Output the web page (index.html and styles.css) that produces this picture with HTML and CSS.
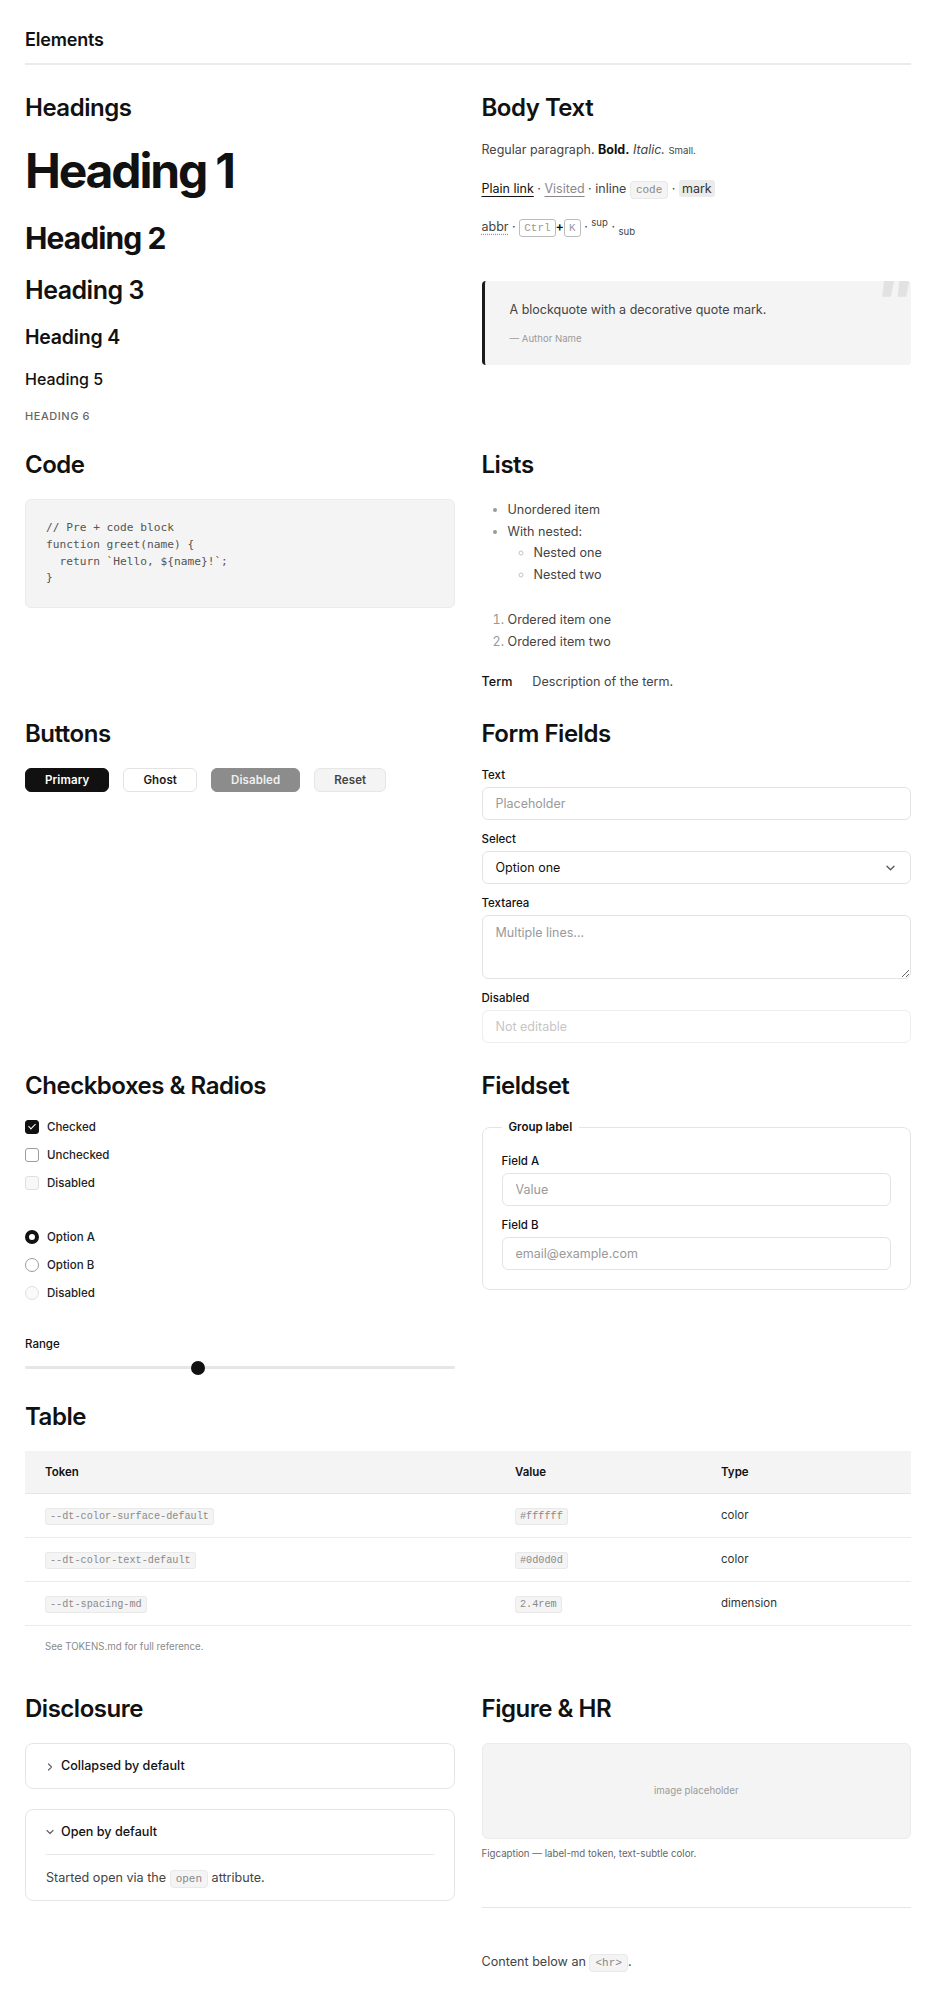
FILE: index.html
```html
<!DOCTYPE html>
<html lang="en">
<head>
<meta charset="utf-8">
<title>Elements</title>
<link rel="stylesheet" href="styles.css">
</head>
<body>
<div class="page">
  <header class="page-header">
    <h1 class="page-title">Elements</h1>
  </header>

  <main class="grid">
    <section class="sec">
      <h2 class="sec-title">Headings</h2>
      <div class="heading-stack">
        <h1 class="h1">Heading 1</h1>
        <h2 class="h2">Heading 2</h2>
        <h3 class="h3">Heading 3</h3>
        <h4 class="h4">Heading 4</h4>
        <h5 class="h5">Heading 5</h5>
        <h6 class="h6">Heading 6</h6>
      </div>
    </section>

    <section class="sec">
      <h2 class="sec-title">Body Text</h2>
      <p class="para para-first">Regular paragraph. <strong class="bold">Bold.</strong> <em class="italic">Italic.</em> <small class="small">Small.</small></p>
      <p class="para"><a class="link" href="#plain">Plain link</a> · <a class="link link-visited" href="#visited">Visited</a> · inline <code class="code-inline">code</code> · <mark class="mark">mark</mark></p>
      <p class="para"><abbr class="abbr" title="abbreviation">abbr</abbr> · <kbd class="kbd">Ctrl</kbd><span class="plus">+</span><kbd class="kbd">K</kbd> · <sup class="sup">sup</sup> · <sub class="sub">sub</sub></p>
      <blockquote class="quote">
        <p class="quote-text">A blockquote with a decorative quote mark.</p>
        <cite class="quote-cite">— Author Name</cite>
      </blockquote>
    </section>

    <section class="sec">
      <h2 class="sec-title">Code</h2>
<pre class="pre"><code>// Pre + code block
function greet(name) {
  return `Hello, ${name}!`;
}</code></pre>
    </section>

    <section class="sec">
      <h2 class="sec-title">Lists</h2>
      <ul class="ul">
        <li>Unordered item</li>
        <li>With nested:
          <ul class="ul-nested">
            <li>Nested one</li>
            <li>Nested two</li>
          </ul>
        </li>
      </ul>
      <ol class="ol">
        <li>Ordered item one</li>
        <li>Ordered item two</li>
      </ol>
      <dl class="dl">
        <dt class="dt">Term</dt>
        <dd class="dd">Description of the term.</dd>
      </dl>
    </section>

    <section class="sec">
      <h2 class="sec-title">Buttons</h2>
      <div class="btn-row">
        <button class="btn btn-primary" type="button">Primary</button>
        <button class="btn btn-ghost" type="button">Ghost</button>
        <button class="btn btn-disabled" type="button" disabled>Disabled</button>
        <button class="btn btn-reset" type="reset">Reset</button>
      </div>
    </section>

    <section class="sec sec-form">
      <h2 class="sec-title">Form Fields</h2>
      <div class="fields">
        <div class="field">
          <label class="label" for="f-text">Text</label>
          <input class="input" id="f-text" type="text" placeholder="Placeholder">
        </div>
        <div class="field">
          <label class="label" for="f-select">Select</label>
          <div class="select-wrap">
            <select class="input select" id="f-select">
              <option>Option one</option>
              <option>Option two</option>
            </select>
            <svg class="select-chev" width="9" height="6" viewBox="0 0 9 6" aria-hidden="true"><path d="M1 1.2l3.5 3.5L8 1.2" fill="none" stroke="#555" stroke-width="1.3" stroke-linecap="round" stroke-linejoin="round"/></svg>
          </div>
        </div>
        <div class="field">
          <label class="label" for="f-area">Textarea</label>
          <textarea class="input textarea" id="f-area" placeholder="Multiple lines..."></textarea>
        </div>
        <div class="field">
          <label class="label" for="f-dis">Disabled</label>
          <input class="input" id="f-dis" type="text" placeholder="Not editable" disabled>
        </div>
      </div>
    </section>

    <section class="sec">
      <h2 class="sec-title">Checkboxes &amp; Radios</h2>
      <div class="choice-group">
        <label class="choice"><input class="cb" type="checkbox" checked><span>Checked</span></label>
        <label class="choice"><input class="cb" type="checkbox"><span>Unchecked</span></label>
        <label class="choice"><input class="cb" type="checkbox" disabled><span>Disabled</span></label>
      </div>
      <div class="choice-group radios">
        <label class="choice"><input class="rb" type="radio" name="opt" checked><span>Option A</span></label>
        <label class="choice"><input class="rb" type="radio" name="opt"><span>Option B</span></label>
        <label class="choice"><input class="rb" type="radio" name="opt" disabled><span>Disabled</span></label>
      </div>
      <div class="range-block">
        <label class="label" for="f-range">Range</label>
        <input class="range" id="f-range" type="range" min="0" max="100" value="40">
      </div>
    </section>

    <section class="sec">
      <h2 class="sec-title">Fieldset</h2>
      <fieldset class="fieldset">
        <legend class="legend">Group label</legend>
        <div class="fields">
          <div class="field">
            <label class="label" for="f-a">Field A</label>
            <input class="input" id="f-a" type="text" placeholder="Value">
          </div>
          <div class="field">
            <label class="label" for="f-b">Field B</label>
            <input class="input" id="f-b" type="email" placeholder="email@example.com">
          </div>
        </div>
      </fieldset>
    </section>

    <section class="sec sec-wide">
      <h2 class="sec-title">Table</h2>
      <table class="table">
        <caption class="table-caption">See TOKENS.md for full reference.</caption>
        <colgroup>
          <col class="col-token">
          <col class="col-value">
          <col>
        </colgroup>
        <thead>
          <tr><th>Token</th><th>Value</th><th>Type</th></tr>
        </thead>
        <tbody>
          <tr><td><code class="chip">--dt-color-surface-default</code></td><td><code class="chip">#ffffff</code></td><td>color</td></tr>
          <tr><td><code class="chip">--dt-color-text-default</code></td><td><code class="chip">#0d0d0d</code></td><td>color</td></tr>
          <tr><td><code class="chip">--dt-spacing-md</code></td><td><code class="chip">2.4rem</code></td><td>dimension</td></tr>
        </tbody>
      </table>
    </section>

    <section class="sec">
      <h2 class="sec-title">Disclosure</h2>
      <details class="disclosure">
        <summary class="summary"><svg class="chev" width="8" height="8" viewBox="0 0 8 8" aria-hidden="true"><path d="M2.5 1l3 3-3 3" fill="none" stroke="#666" stroke-width="1.2" stroke-linecap="round" stroke-linejoin="round"/></svg>Collapsed by default</summary>
        <div class="disclosure-body">Hidden content.</div>
      </details>
      <details class="disclosure" open>
        <summary class="summary"><svg class="chev" width="8" height="8" viewBox="0 0 8 8" aria-hidden="true"><path d="M2.5 1l3 3-3 3" fill="none" stroke="#666" stroke-width="1.2" stroke-linecap="round" stroke-linejoin="round"/></svg>Open by default</summary>
        <div class="disclosure-body">Started open via the <code class="code-inline">open</code> attribute.</div>
      </details>
    </section>

    <section class="sec">
      <h2 class="sec-title">Figure &amp; HR</h2>
      <figure class="figure">
        <div class="figure-img">image placeholder</div>
        <figcaption class="figcaption">Figcaption — label-md token, text-subtle color.</figcaption>
      </figure>
      <hr class="hr">
      <p class="after-hr">Content below an <code class="code-inline">&lt;hr&gt;</code>.</p>
    </section>
  </main>
</div>
</body>
</html>
```

FILE: styles.css
```css
* { box-sizing: border-box; }

html, body {
  margin: 0;
  padding: 0;
  background: #ffffff;
}

body {
  font-family: Inter, "Liberation Sans", sans-serif;
  color: #111111;
  -webkit-font-smoothing: antialiased;
}

.page {
  padding: 0 23px 60px 25px;
}

.page-header {
  padding: 29px 0 12px;
  border-bottom: 2px solid #ebebeb;
}

.page-title {
  margin: 0;
  font-size: 18px;
  line-height: 22px;
  font-weight: 600;
  letter-spacing: -0.01em;
}

.grid {
  display: grid;
  grid-template-columns: 1fr 1fr;
  column-gap: 27px;
  row-gap: 26px;
  padding-top: 28px;
  align-items: start;
}

.sec { min-width: 0; }
.sec-wide { grid-column: 1 / -1; }
.sec-form { padding-bottom: 2px; }

.sec-title {
  margin: 0 0 20px;
  font-size: 24px;
  line-height: 29px;
  font-weight: 600;
  letter-spacing: -0.02em;
  color: #111111;
}

/* Headings */
.heading-stack {
  display: flex;
  flex-direction: column;
  gap: 18px;
}
.heading-stack > * { margin: 0; color: #111111; }
.h1 { font-size: 48px; line-height: 58px; font-weight: 700; letter-spacing: -0.045em; }
.h2 { font-size: 30px; line-height: 36px; font-weight: 700; letter-spacing: -0.03em; margin-top: 2px; }
.h3 { font-size: 25px; line-height: 30px; font-weight: 600; letter-spacing: -0.02em; margin-top: 1px; }
.h4 { font-size: 19.5px; line-height: 26px; font-weight: 600; letter-spacing: -0.01em; margin-top: 1px; }
.h5 { font-size: 16px; line-height: 22px; font-weight: 500; }
.h6 { font-size: 11px; line-height: 16px; font-weight: 500; text-transform: uppercase; letter-spacing: 0.05em; color: #666666; }

/* Body text */
.para {
  margin: 0 0 18px;
  font-size: 12.5px;
  line-height: 20px;
  color: #444444;
}
.para-first { margin-top: -2px; }
.bold { font-weight: 700; color: #111111; }
.italic { font-style: italic; }
.small { font-size: 9.6px; }
.link { color: #111111; text-decoration: underline; text-underline-offset: 3px; text-decoration-thickness: 1px; }
.link-visited { color: #8a8a8a; }
.code-inline {
  font-family: "Liberation Mono", monospace;
  font-size: 11px;
  line-height: 1;
  color: #888888;
  background: #f4f4f4;
  border: 1px solid #e9e9e9;
  border-radius: 4px;
  padding: 2px 5px;
}
.mark {
  background: #ebebeb;
  color: #333333;
  padding: 1px 3px;
  border-radius: 3px;
}
.abbr { text-decoration: underline dotted #999999; text-underline-offset: 3px; }
.kbd {
  font-family: "Liberation Mono", monospace;
  font-size: 11px;
  line-height: 1;
  color: #999999;
  border: 1px solid #bdbdbd;
  border-radius: 3px;
  padding: 2px 4px;
}
.plus { color: #111111; font-weight: 600; }
.sup, .sub { font-size: 9.6px; line-height: 0; }

.quote {
  position: relative;
  overflow: hidden;
  margin: 44px 0 0;
  padding: 20px 24px 19px 25px;
  background: #f4f4f4;
  border-left: 3px solid #1a1a1a;
  border-radius: 4px;
}
.quote::after {
  content: "\0022";
  position: absolute;
  top: -14px;
  right: -1px;
  font-family: Inter, "Liberation Sans", sans-serif;
  font-style: italic;
  font-weight: 800;
  font-size: 66px;
  line-height: 1;
  color: #e2e2e2;
}
.quote-text {
  position: relative;
  margin: 0;
  font-size: 12.5px;
  line-height: 18px;
  color: #444444;
}
.quote-cite {
  display: block;
  margin-top: 13px;
  font-style: normal;
  font-size: 9.6px;
  line-height: 14px;
  color: #9a9a9a;
}

/* Code */
.pre {
  margin: 0;
  padding: 20px 20px;
  background: #f4f4f4;
  border: 1px solid #ebebeb;
  border-radius: 6px;
  font-family: "Liberation Mono", monospace;
  font-size: 11.2px;
  line-height: 16.8px;
  color: #555555;
}

/* Lists */
.ul, .ol {
  margin: 0;
  padding-left: 26px;
  font-size: 12.6px;
  line-height: 21.7px;
  color: #444444;
}
.ul { margin-top: 3px; }
.ul li::marker, .ol li::marker { color: #999999; }
.ul-nested {
  margin: 0;
  padding-left: 26px;
  list-style: circle;
}
.ul-nested li::marker { color: #c4c4c4; }
.ol { margin-top: 23px; }
.dl {
  display: flex;
  gap: 20px;
  margin: 19px 0 0;
  font-size: 12.6px;
  line-height: 21.7px;
}
.dt { font-weight: 500; color: #111111; }
.dd { margin: 0; color: #444444; }

/* Buttons */
.btn-row {
  display: flex;
  gap: 14px;
}
.btn {
  height: 24px;
  padding: 0 19px;
  border-radius: 6px;
  font-family: Inter, "Liberation Sans", sans-serif;
  font-size: 11.5px;
  font-weight: 600;
  letter-spacing: 0.01em;
  border: 1px solid transparent;
  cursor: pointer;
}
.btn-primary { background: #111111; color: #ffffff; border-color: #111111; }
.btn-ghost { background: #ffffff; color: #1a1a1a; border-color: #e3e3e3; }
.btn-disabled { background: #8c8c8c; color: #efefef; border-color: #8c8c8c; }
.btn-reset { background: #f4f4f4; color: #444444; border-color: #e6e6e6; }

/* Form fields */
.fields {
  display: flex;
  flex-direction: column;
  gap: 12px;
}
.field {
  display: flex;
  flex-direction: column;
  gap: 5px;
}
.label {
  font-size: 11.5px;
  line-height: 14px;
  font-weight: 500;
  color: #111111;
}
.input {
  width: 100%;
  height: 33px;
  margin: 0;
  padding: 0 13px;
  border: 1px solid #e3e3e3;
  border-radius: 6px;
  background: #ffffff;
  font-family: Inter, "Liberation Sans", sans-serif;
  font-size: 12.5px;
  color: #111111;
}
.input::placeholder { color: #9a9a9a; }
.input:disabled { border-color: #eeeeee; background: #ffffff; }
.input:disabled::placeholder { color: #c6c6c6; }
.select-wrap { position: relative; }
.select {
  -webkit-appearance: none;
  appearance: none;
}
.select-chev {
  position: absolute;
  right: 16px;
  top: 14px;
}
.textarea {
  height: 64px;
  padding: 9px 13px;
  line-height: 16px;
  resize: vertical;
  display: block;
}

/* Checkboxes & radios */
.choice-group {
  display: flex;
  flex-direction: column;
  gap: 14px;
}
.radios { margin-top: 40px; }
.choice {
  display: flex;
  align-items: center;
  gap: 8px;
  height: 14px;
  font-size: 11.5px;
  font-weight: 500;
  color: #222222;
}
.cb, .rb {
  -webkit-appearance: none;
  appearance: none;
  margin: 0;
  width: 14px;
  height: 14px;
  flex: 0 0 14px;
  position: relative;
  background: #ffffff;
}
.cb {
  border: 1.5px solid #9c9c9c;
  border-radius: 3px;
}
.cb:checked {
  background: #111111;
  border-color: #111111;
}
.cb:checked::after {
  content: "";
  position: absolute;
  left: 3.6px;
  top: 1.2px;
  width: 3px;
  height: 6px;
  border: solid #ffffff;
  border-width: 0 1.6px 1.6px 0;
  transform: rotate(45deg);
}
.cb:disabled { border: 1px solid #e0e0e0; background: #f8f8f8; }
.rb {
  border: 1.5px solid #9c9c9c;
  border-radius: 50%;
}
.rb:checked { border: 4.5px solid #111111; }
.rb:disabled { border: 1px solid #e0e0e0; background: #fafafa; }

.range-block {
  margin-top: 37px;
  display: flex;
  flex-direction: column;
  gap: 9px;
}
.range {
  -webkit-appearance: none;
  appearance: none;
  display: block;
  width: 100%;
  height: 16px;
  margin: 0;
  background: transparent;
}
.range::-webkit-slider-runnable-track {
  height: 3px;
  background: #e6e6e6;
  border-radius: 2px;
}
.range::-webkit-slider-thumb {
  -webkit-appearance: none;
  appearance: none;
  width: 14px;
  height: 14px;
  margin-top: -5.5px;
  border-radius: 50%;
  background: #111111;
  border: none;
}

/* Fieldset */
.fieldset {
  margin: 0;
  min-width: 0;
  padding: 19px 19px 19px;
  border: 1px solid #e5e5e5;
  border-radius: 8px;
}
.legend {
  padding: 0 7px;
  font-size: 11.5px;
  line-height: 15px;
  font-weight: 600;
  color: #111111;
}

/* Table */
.table {
  width: 100%;
  border-collapse: collapse;
  font-size: 11.5px;
  color: #333333;
}
.col-token { width: 470px; }
.col-value { width: 206px; }
.table th {
  text-align: left;
  font-weight: 600;
  color: #111111;
  background: #f4f4f4;
  padding: 13px 20px;
  line-height: 16px;
  border-bottom: 1px solid #e5e5e5;
}
.table td {
  padding: 13px 20px;
  line-height: 17px;
  border-bottom: 1px solid #ebebeb;
}
.chip {
  font-family: "Liberation Mono", monospace;
  font-size: 10.2px;
  line-height: 1;
  color: #8a8a8a;
  background: #f4f4f4;
  border: 1px solid #e9e9e9;
  border-radius: 3px;
  padding: 2px 4px;
}
.table-caption {
  caption-side: bottom;
  text-align: left;
  padding: 13px 20px 13px;
  font-size: 9.7px;
  line-height: 16px;
  color: #8a8a8a;
}

/* Disclosure */
.disclosure {
  border: 1px solid #e5e5e5;
  border-radius: 8px;
  padding: 0 20px;
  margin-bottom: 20px;
}
.summary {
  list-style: none;
  display: flex;
  align-items: center;
  gap: 7px;
  padding: 13px 0;
  font-size: 12.6px;
  line-height: 18px;
  font-weight: 500;
  color: #111111;
  cursor: pointer;
}
.summary::-webkit-details-marker { display: none; }
.chev { flex: 0 0 8px; margin-top: 2px; }
.disclosure[open] .chev { transform: rotate(90deg); margin-top: 0; }
.disclosure-body {
  border-top: 1px solid #e8e8e8;
  padding: 12px 0 11px;
  font-size: 12.6px;
  line-height: 22px;
  color: #444444;
}

/* Figure & HR */
.figure { margin: 0; }
.figure-img {
  height: 96px;
  display: flex;
  align-items: center;
  justify-content: center;
  background: #f4f4f4;
  border: 1px solid #ebebeb;
  border-radius: 6px;
  font-size: 9.7px;
  color: #9a9a9a;
}
.figcaption {
  margin-top: 7px;
  font-size: 9.7px;
  line-height: 16px;
  color: #666666;
}
.hr {
  margin: 45px 0 0;
  border: 0;
  border-top: 1px solid #e5e5e5;
}
.after-hr {
  margin: 43px 0 0;
  font-size: 12.6px;
  line-height: 22px;
  color: #444444;
}
```
